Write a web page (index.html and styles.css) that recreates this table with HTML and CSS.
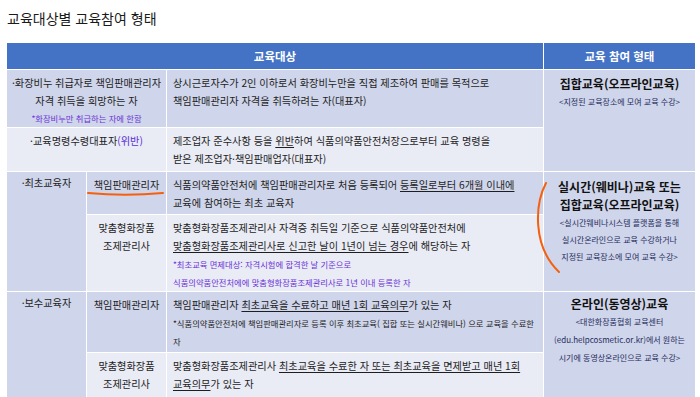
FILE: index.html
```html
<!DOCTYPE html>
<html lang="ko">
<head>
<meta charset="utf-8">
<link rel="stylesheet" href="styles.css">
</head>
<body>
<div class="page">
  <h1 class="title">교육대상별 교육참여 형태</h1>
  <div class="grid">
    <div class="hd hd-main">교육대상</div>
    <div class="hd hd-side">교육 참여 형태</div>

    <div class="cell dark left-span r1">
      <div>·화장비누 취급자로 책임판매관리자</div>
      <div>자격 취득을 희망하는 자</div>
      <div class="note purple">*화장비누만 취급하는 자에 한함</div>
    </div>
    <div class="cell dark desc">상시근로자수가 2인 이하로서 화장비누만을 직접 제조하여 판매를 목적으로<br>책임판매관리자 자격을 취득하려는 자(대표자)</div>
    <div class="cell dark form form-r12">
      <div class="form-title">집합교육(오프라인교육)</div>
      <div class="form-note">&lt;지정된 교육장소에 모여 교육 수강&gt;</div>
    </div>

    <div class="cell light left-span">
      <div>·교육명령수령대표자<span class="purple-inline">(위반)</span></div>
    </div>
    <div class="cell light desc">제조업자 준수사항 등을 <u>위반</u>하여 식품의약품안전처장으로부터 교육 명령을<br>받은 제조업자·책임판매업자(대표자)</div>

    <div class="cell dark group g3">·최초교육자</div>
    <div class="cell dark sub">책임판매관리자</div>
    <div class="cell dark desc">식품의약품안전처에 책임판매관리자로 처음 등록되어 <u>등록일로부터 6개월 이내에</u><br>교육에 참여하는 최초 교육자</div>
    <div class="cell dark form form-r3">
      <div class="form-title">실시간(웨비나)교육 또는</div>
      <div class="form-title">집합교육(오프라인교육)</div>
      <div class="form-note tight">&lt;실시간웨비나시스템 플랫폼을 통해</div>
      <div class="form-note tight">실시간온라인으로 교육 수강하거나</div>
      <div class="form-note tight">지정된 교육장소에 모여 교육 수강&gt;</div>
    </div>
    <div class="cell light sub">맞춤형화장품<br>조제관리사</div>
    <div class="cell light desc">맞춤형화장품조제관리사 자격증 취득일 기준으로 식품의약품안전처에<br><u>맞춤형화장품조제관리사로 신고한 날이 1년이 넘는 경우</u>에 해당하는 자
      <div class="note purple">*최초교육 면제대상: 자격시험에 합격한 날 기준으로</div>
      <div class="note purple">식품의약품안전처에에 맞춤형화장품조제관리사로 1년 이내 등록한 자</div>
    </div>

    <div class="cell dark group g4">·보수교육자</div>
    <div class="cell dark sub">책임판매관리자</div>
    <div class="cell dark desc">책임판매관리자 <u>최초교육을 수료하고 매년 1회 교육의무</u>가 있는 자
      <div class="note">*식품의약품안전처에 책임판매관리자로 등록 이후 최초교육( 집합 또는 실시간웨비나) 으로 교육을 수료한<br>자</div>
    </div>
    <div class="cell dark form form-r4">
      <div class="form-title">온라인(동영상)교육</div>
      <div class="form-note">&lt;대한화장품협회 교육센터</div>
      <div class="form-note">(edu.helpcosmetic.or.kr)에서 원하는</div>
      <div class="form-note">시기에 동영상온라인으로 교육 수강&gt;</div>
    </div>
    <div class="cell light sub">맞춤형화장품<br>조제관리사</div>
    <div class="cell light desc">맞춤형화장품조제관리사 <u>최초교육을 수료한 자 또는 최초교육을 면제받고 매년 1회</u><br><u>교육의무</u>가 있는 자</div>
  </div>
  <svg class="marks" width="700" height="397" viewBox="0 0 700 397" aria-hidden="true">
    <path d="M88 193 Q125 196.5 163 193" fill="none" stroke="#f4600e" stroke-width="2" stroke-linecap="round"/>
    <path d="M546 183 C535 204 532 246 559 272" fill="none" stroke="#f4600e" stroke-width="2" stroke-linecap="round"/>
  </svg>
</div>
</body>
</html>
```

FILE: styles.css
```css
html, body {
  margin: 0;
  padding: 0;
  background: #ffffff;
}
body {
  font-family: "Noto Sans CJK KR", "Noto Sans", sans-serif;
  color: #1e1e1e;
  overflow: hidden;
}
.page {
  position: relative;
  width: 700px;
  height: 397px;
  padding: 7px 5px 0 7px;
  box-sizing: border-box;
}
.title {
  margin: 0 0 14px 0;
  font-size: 14px;
  line-height: 22px;
  font-weight: normal;
  color: #1a1a1a;
}
.grid {
  display: grid;
  grid-template-columns: 79px 79px 376px 151px;
  grid-template-rows: 26px 57px 43px 42px 76px 60px 50px;
  gap: 1px;
  font-size: 10.2px;
  line-height: 18px;
}
.hd {
  background: #4472c4;
  color: #ffffff;
  font-weight: bold;
  font-size: 11.5px;
  display: flex;
  align-items: center;
  justify-content: center;
}
.hd-main { grid-column: 1 / 4; }
.hd-side { grid-column: 4; }
.dark { background: #cfd5ea; }
.light { background: #e9ebf5; }
.cell {
  padding-top: 4px;
  box-sizing: border-box;
  white-space: nowrap;
  overflow: hidden;
}
.left-span {
  grid-column: 1 / 3;
  text-align: center;
}
.desc {
  grid-column: 3;
  padding-left: 6px;
}
.group {
  grid-column: 1;
  text-align: center;
  padding-top: 2px;
}
.g3 { grid-row: 4 / 6; }
.g4 { grid-row: 6 / 8; }
.sub {
  grid-column: 2;
  text-align: center;
}
.form {
  grid-column: 4;
  text-align: center;
  padding-top: 5px;
}
.form-r12 { grid-row: 2 / 4; }
.form-r3 { grid-row: 4 / 6; padding-top: 6px; }
.form-r4 { grid-row: 6 / 8; padding-top: 3px; }
.form-title {
  font-weight: bold;
  font-size: 12px;
  line-height: 18px;
  color: #111111;
}
.form-note {
  font-size: 8px;
  line-height: 18px;
  color: #1f2c5c;
}
.form-note.tight { line-height: 17px; }
.note {
  font-size: 8.3px;
  line-height: 18px;
}
.purple { color: #6b32d6; }
.purple-inline { color: #5a2fd6; }
u {
  text-decoration: underline;
  text-underline-offset: 2px;
}
.r1 .note { line-height: 16px; }
.marks {
  position: absolute;
  left: 0;
  top: 0;
  pointer-events: none;
}
```
